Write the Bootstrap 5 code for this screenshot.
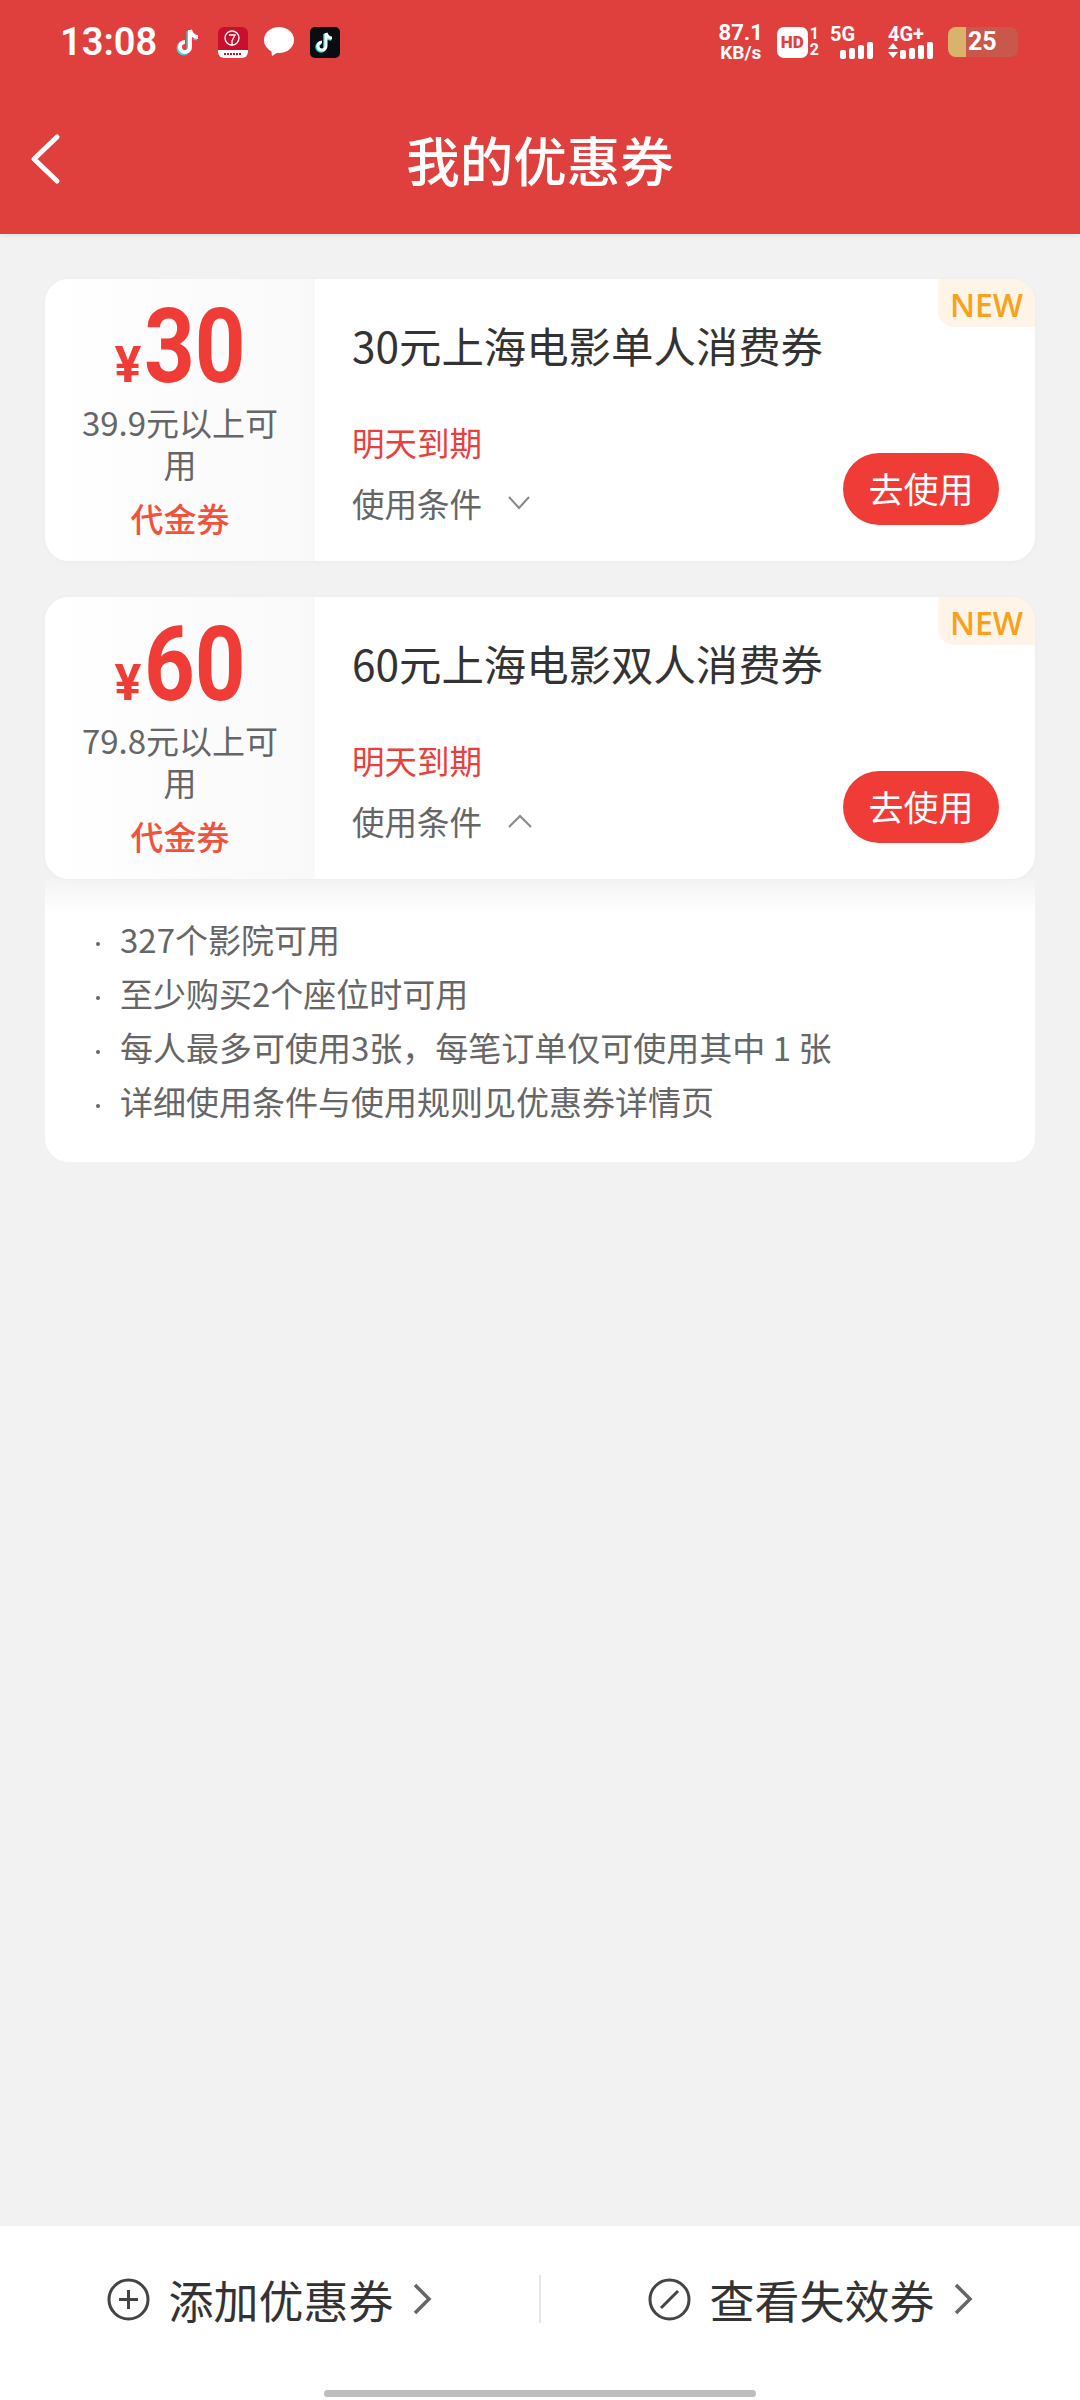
<!DOCTYPE html>
<html lang="zh-CN">
<head>
    <meta charset="UTF-8">
    <meta name="viewport" content="width=device-width, initial-scale=1.0">
    <title>我的优惠券</title>
    <link rel="stylesheet" href="https://cdn.jsdelivr.net/npm/bootstrap@5.3.0/dist/css/bootstrap.min.css">
    <style>
        body {
            font-family: "Noto Sans CJK SC", "Noto Sans", sans-serif;
            background: #f2f2f2;
            width: 1080px;
            height: 2400px;
            overflow: hidden;
        }
        .top-head {
            background: #df403d;
            color: #fff;
            height: 234px;
            box-shadow: 0 2px 6px rgba(0, 0, 0, .08);
        }
        .status-row {
            height: 84px;
            padding: 0 62px 0 60px;
        }
        .clock {
            font: 600 38px/1 "Roboto", sans-serif;
            width: 92px;
            margin-right: 24px;
        }
        .app-icons { gap: 16px; }
        .net-speed {
            font: 700 19px/18px "Roboto", sans-serif;
            text-align: center;
            margin-right: 14px;
        }
        .net-speed div:first-child { font-size: 22px; line-height: 22px; }
        .hd-box {
            width: 31px;
            height: 31px;
            background: #fff;
            color: #df403d;
            border-radius: 7px;
            font: 900 17px/31px "Roboto", sans-serif;
            text-align: center;
        }
        .sim-nums {
            font: 700 16px/16px "Roboto", sans-serif;
            margin: 0 11px 0 2px;
        }
        .sig-label {
            font: 700 20px/16px "Roboto", sans-serif;
            display: block;
        }
        .sig-wrap { margin-right: 14px; }
        .sig-wrap:last-of-type { margin-right: 8px; }
        .batt {
            width: 70px;
            height: 30px;
            border-radius: 8px;
            background: #c9574c;
            font: 700 25px/30px "Roboto", sans-serif;
        }
        .batt-fill {
            width: 18px;
            background: #d9b36c;
        }
        .batt-num { padding-left: 2px; }
        .nav-row {
            display: grid;
            grid-template-columns: 1fr auto 1fr;
            align-items: center;
            height: 150px;
            padding-left: 28px;
        }
        .page-title {
            font-size: 53.5px;
            font-weight: 500;
            line-height: 1;
            margin: 0 28px 0 0;
        }
        .page-main {
            padding: 45px 45px 0;
            gap: 36px;
        }
        .coupon-box {
            position: relative;
            height: 282px;
            background: #fff;
            border-radius: 24px;
            box-shadow: 0 1px 6px rgba(0, 0, 0, .03);
            overflow: hidden;
        }
        .coupon-left {
            width: 270px;
            padding: 24px 30px 0;
            text-align: center;
            background: linear-gradient(90deg, #fff, #f9f9f9);
        }
        .price-line {
            color: #f03c37;
            line-height: 1;
            height: 98px;
            white-space: nowrap;
            margin: 0 -20px;
        }
        .price-yen {
            font: 700 50px/1 "Roboto", sans-serif;
            margin-right: 3px;
        }
        .price-num {
            display: inline-block;
            font: 700 103px/88px "Roboto", sans-serif;
            transform: scaleX(.86);
            transform-origin: left center;
            margin-right: -17px;
        }
        .limit-text {
            color: #666;
            font-size: 33px;
            line-height: 42px;
        }
        .type-text {
            color: #f0533d;
            font-size: 33px;
            font-weight: 500;
            line-height: 1;
            margin-top: 17px;
        }
        .coupon-right { padding: 38px 36px 36px 37px; }
        .coupon-title {
            font-size: 42.4px;
            line-height: 56px;
            font-weight: 400;
            color: #333;
            margin: 0;
        }
        .expire-text {
            color: #e8403c;
            font-size: 32.5px;
            line-height: 44px;
            margin-top: 47px;
        }
        .cond-text {
            color: #666;
            font-size: 32.5px;
            line-height: 44px;
            margin-top: 17px;
            gap: 25px;
        }
        .use-btn {
            width: 156px;
            height: 72px;
            padding: 0 0 3px;
            background: #f03c37;
            border: 0;
            color: #fff;
            font-size: 35px;
            line-height: 69px;
            margin-bottom: 0;
        }
        .new-tag {
            position: absolute;
            top: 0;
            right: 0;
            width: 97px;
            height: 48px;
            background: #fef4e8;
            border-bottom-left-radius: 16px;
            color: #f7a21d;
            font: 600 32px/52px "Open Sans", sans-serif;
            text-align: center;
        }
        .rule-panel {
            margin-top: -36px;
            height: 283px;
            padding: 33px 0 0 51px;
            border-radius: 0 0 24px 24px;
            background: linear-gradient(#f4f4f4, #fff 34px);
            color: #666;
            font-size: 33px;
            line-height: 54px;
        }
        .rule-panel li::before {
            content: "";
            display: inline-block;
            width: 4px;
            height: 4px;
            border-radius: 50%;
            background: #666;
            margin-right: 20px;
            vertical-align: middle;
        }
        .bottom-bar {
            position: relative;
            height: 174px;
            background: #fff;
            padding-bottom: 28px;
            color: #333;
            font-size: 45px;
        }
        .bottom-item { gap: 18px; line-height: 1; }
        .bottom-sep {
            width: 2px;
            height: 48px;
            background: #e6e6e6;
        }
        .home-bar {
            position: absolute;
            left: 324px;
            bottom: 3px;
            width: 432px;
            height: 7px;
            border-radius: 4px;
            background: #bdbdbd;
        }
    </style>
</head>
<body class="d-flex flex-column">
    <header class="top-head">
        <div class="status-row d-flex align-items-center">
            <span class="clock">13:08</span>
            <div class="app-icons d-flex align-items-center flex-grow-1">
                <svg width="26" height="30" viewBox="0 0 26 30"><path d="M14 3v17a5 5 0 1 1-5-5M14 3c1 4 4 7 8 7" fill="none" stroke="#25e0e0" stroke-width="5" transform="translate(-1 1)"/><path d="M14 3v17a5 5 0 1 1-5-5M14 3c1 4 4 7 8 7" fill="none" stroke="#ff2d55" stroke-width="5" transform="translate(1 0)"/><path d="M14 3v17a5 5 0 1 1-5-5M14 3c1 4 4 7 8 7" fill="none" stroke="#fff" stroke-width="4"/></svg>
                <svg width="30" height="31" viewBox="0 0 30 31"><rect width="30" height="31" rx="6" fill="#c8102e"/><path d="M0 23h30v2a6 6 0 0 1-6 6H6a6 6 0 0 1-6-6z" fill="#fff"/><circle cx="14" cy="11" r="7" fill="none" stroke="#fff" stroke-width="1.3"/><path d="M11 8h6l-3 6v5" fill="none" stroke="#fff" stroke-width="1.3"/><path d="M6 27h18" stroke="#c8102e" stroke-width="2" stroke-dasharray="2 1"/></svg>
                <svg width="30" height="30" viewBox="0 0 30 30"><ellipse cx="15" cy="13" rx="15" ry="13" fill="#fff"/><path d="M7 21l1 8 8-5z" fill="#fff"/></svg>
                <svg width="30" height="31" viewBox="0 0 30 31"><rect width="30" height="31" rx="5" fill="#0b0b12"/><path d="M16 6v13a4 4 0 1 1-4-4M16 6c1 3 3 5 6 5" fill="none" stroke="#25e0e0" stroke-width="3.5" transform="translate(-1 1)"/><path d="M16 6v13a4 4 0 1 1-4-4M16 6c1 3 3 5 6 5" fill="none" stroke="#fff" stroke-width="3"/></svg>
            </div>
            <div class="net-speed"><div>87.1</div><div>KB/s</div></div>
            <span class="hd-box">HD</span>
            <div class="sim-nums"><div>1</div><div>2</div></div>
            <div class="sig-wrap">
                <span class="sig-label">5G</span>
                <svg width="44" height="17" viewBox="0 0 44 17" class="d-block"><g fill="#fff"><rect x="10" y="8" width="6" height="9" rx="2"/><rect x="19" y="6" width="6" height="11" rx="2"/><rect x="28" y="3" width="6" height="14" rx="2"/><rect x="37" y="0" width="6" height="17" rx="2"/></g></svg>
            </div>
            <div class="sig-wrap">
                <span class="sig-label">4G+</span>
                <svg width="46" height="17" viewBox="0 0 46 17" class="d-block"><g fill="#fff"><path d="M0 7l5-6 5 6zM0 10h10l-5 6z"/><rect x="12" y="8" width="6" height="9" rx="2"/><rect x="21" y="6" width="6" height="11" rx="2"/><rect x="30" y="3" width="6" height="14" rx="2"/><rect x="39" y="0" width="6" height="17" rx="2"/></g></svg>
            </div>
            <div class="batt d-flex overflow-hidden">
                <span class="batt-fill"></span>
                <span class="batt-num">25</span>
            </div>
        </div>
        <div class="nav-row">
            <svg width="34" height="52" viewBox="0 0 34 52"><path d="M29 4L6 26l23 22" fill="none" stroke="#fff" stroke-width="5" stroke-linecap="round" stroke-linejoin="round"/></svg>
            <h1 class="page-title">我的优惠券</h1>
            <span></span>
        </div>
    </header>

    <main class="page-main d-flex flex-column flex-grow-1">
        <section class="coupon-box d-flex">
            <div class="coupon-left">
                <div class="price-line"><span class="price-yen">¥</span><span class="price-num">30</span></div>
                <div class="limit-text">39.9元以上可用</div>
                <div class="type-text">代金券</div>
            </div>
            <div class="coupon-right d-flex flex-column flex-grow-1">
                <h2 class="coupon-title">30元上海电影单人消费券</h2>
                <div class="d-flex justify-content-between align-items-end">
                    <div>
                        <div class="expire-text">明天到期</div>
                        <div class="cond-text d-flex align-items-center">使用条件
                            <svg width="24" height="16" viewBox="0 0 24 16"><path d="M2 2l10 11L22 2" fill="none" stroke="#888" stroke-width="2"/></svg>
                        </div>
                    </div>
                    <button class="use-btn btn rounded-pill">去使用</button>
                </div>
            </div>
            <span class="new-tag">NEW</span>
        </section>

        <section class="coupon-box d-flex">
            <div class="coupon-left">
                <div class="price-line"><span class="price-yen">¥</span><span class="price-num">60</span></div>
                <div class="limit-text">79.8元以上可用</div>
                <div class="type-text">代金券</div>
            </div>
            <div class="coupon-right d-flex flex-column flex-grow-1">
                <h2 class="coupon-title">60元上海电影双人消费券</h2>
                <div class="d-flex justify-content-between align-items-end">
                    <div>
                        <div class="expire-text">明天到期</div>
                        <div class="cond-text d-flex align-items-center">使用条件
                            <svg width="26" height="16" viewBox="0 0 26 16"><path d="M2 14L13 3l11 11" fill="none" stroke="#888" stroke-width="2"/></svg>
                        </div>
                    </div>
                    <button class="use-btn btn rounded-pill">去使用</button>
                </div>
            </div>
            <span class="new-tag">NEW</span>
        </section>

        <ul class="rule-panel list-unstyled">
            <li>327个影院可用</li>
            <li>至少购买2个座位时可用</li>
            <li>每人最多可使用3张，每笔订单仅可使用其中 1 张</li>
            <li>详细使用条件与使用规则见优惠券详情页</li>
        </ul>
    </main>

    <footer class="bottom-bar d-flex align-items-center">
        <div class="bottom-item d-flex align-items-center justify-content-center flex-fill w-50">
            <svg width="43" height="43" viewBox="0 0 43 43"><circle cx="21.5" cy="21.5" r="19.5" fill="none" stroke="#444" stroke-width="3"/><path d="M21.5 12v19M12 21.5h19" stroke="#444" stroke-width="3"/></svg>
            <span>添加优惠券</span>
            <svg width="20" height="32" viewBox="0 0 20 32"><path d="M3 2l14 14L3 30" fill="none" stroke="#666" stroke-width="3.5"/></svg>
        </div>
        <span class="bottom-sep flex-shrink-0"></span>
        <div class="bottom-item d-flex align-items-center justify-content-center flex-fill w-50">
            <svg width="43" height="43" viewBox="0 0 43 43"><circle cx="21.5" cy="21.5" r="19.5" fill="none" stroke="#444" stroke-width="3"/><path d="M13 30l17-17" stroke="#444" stroke-width="3"/></svg>
            <span>查看失效券</span>
            <svg width="20" height="32" viewBox="0 0 20 32"><path d="M3 2l14 14L3 30" fill="none" stroke="#666" stroke-width="3.5"/></svg>
        </div>
        <span class="home-bar"></span>
    </footer>

    <script src="https://cdn.jsdelivr.net/npm/bootstrap@5.3.0/dist/js/bootstrap.bundle.min.js"></script>
</body>
</html>
